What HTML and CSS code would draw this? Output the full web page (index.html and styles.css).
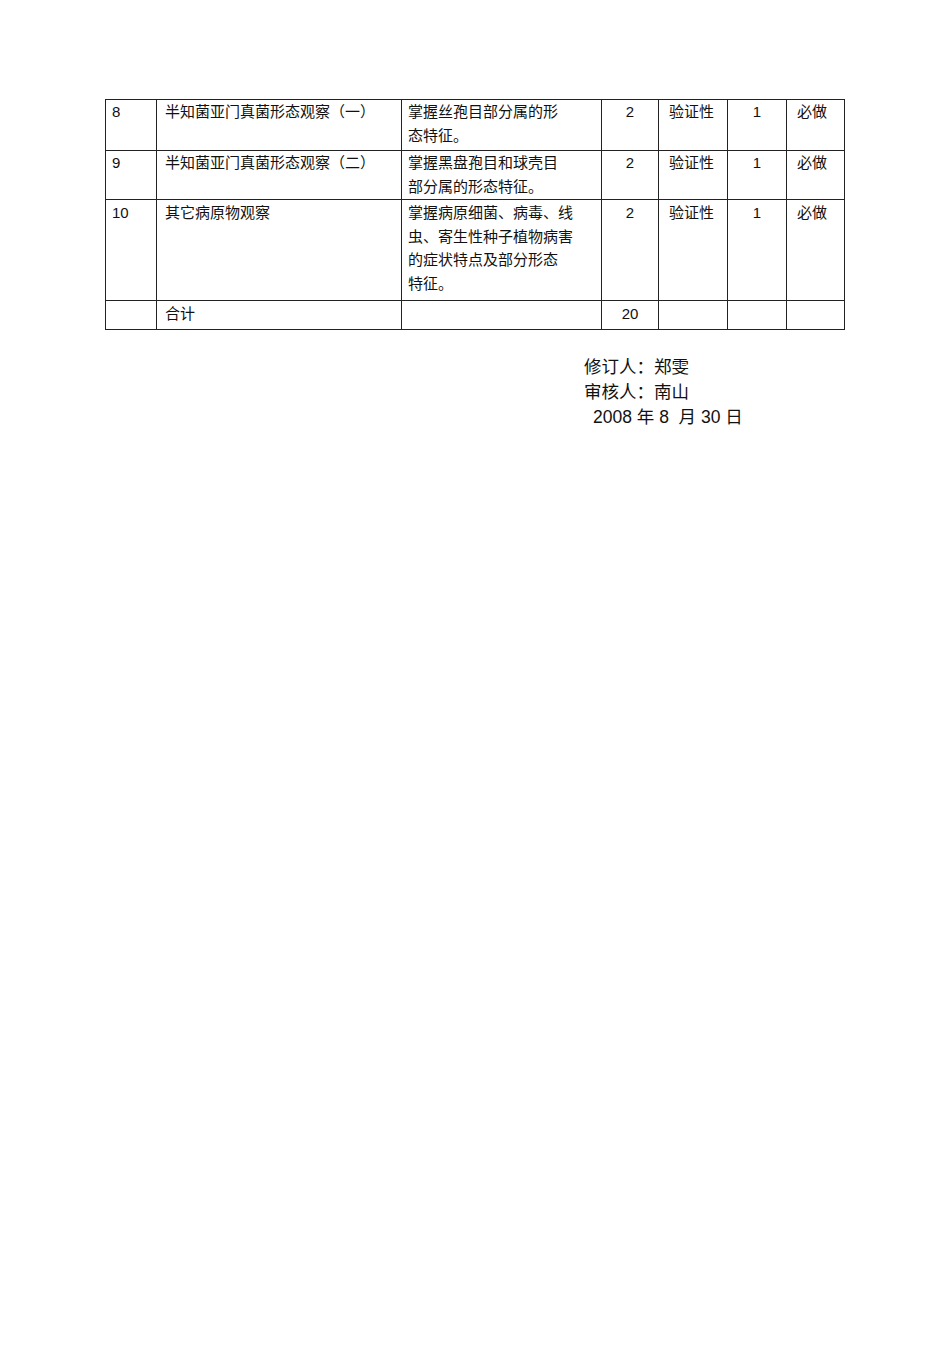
FILE: index.html
```html
<!DOCTYPE html>
<html lang="zh-CN">
<head>
<meta charset="utf-8">
<title>实验课程表</title>
<link rel="stylesheet" href="styles.css">
</head>
<body>
<div class="page">
  <table class="course">
    <colgroup>
      <col class="c1"><col class="c2"><col class="c3"><col class="c4"><col class="c5"><col class="c6"><col class="c7">
    </colgroup>
    <tbody>
      <tr class="r2">
        <td class="no">8</td>
        <td class="name">半知菌亚门真菌形态观察（一）</td>
        <td class="goal">掌握丝孢目部分属的形<br>态特征。</td>
        <td class="num">2</td>
        <td class="type">验证性</td>
        <td class="num">1</td>
        <td class="req">必做</td>
      </tr>
      <tr class="r2b">
        <td class="no">9</td>
        <td class="name">半知菌亚门真菌形态观察（二）</td>
        <td class="goal">掌握黑盘孢目和球壳目<br>部分属的形态特征。</td>
        <td class="num">2</td>
        <td class="type">验证性</td>
        <td class="num">1</td>
        <td class="req">必做</td>
      </tr>
      <tr class="r4">
        <td class="no">10</td>
        <td class="name">其它病原物观察</td>
        <td class="goal">掌握病原细菌、病毒、线<br>虫、寄生性种子植物病害<br>的症状特点及部分形态<br>特征。</td>
        <td class="num">2</td>
        <td class="type">验证性</td>
        <td class="num">1</td>
        <td class="req">必做</td>
      </tr>
      <tr class="r1">
        <td class="no"></td>
        <td class="name">合计</td>
        <td class="goal"></td>
        <td class="num">20</td>
        <td class="type"></td>
        <td class="num"></td>
        <td class="req"></td>
      </tr>
    </tbody>
  </table>

  <div class="sign">
    <div class="line">修订人：郑雯</div>
    <div class="line">审核人：南山</div>
    <div class="line date">2008 年 8&nbsp; 月 30 日</div>
  </div>
</div>
</body>
</html>
```

FILE: styles.css
```css
html, body {
  margin: 0;
  padding: 0;
  background: #ffffff;
}

body {
  font-family: "Liberation Sans", "Noto Sans CJK SC", sans-serif;
  color: #111111;
}

.page {
  padding: 99px 0 0 105px;
}

.course {
  border-collapse: collapse;
  table-layout: fixed;
  width: 739px;
  font-size: 15px;
  line-height: 24px;
}

.c1 { width: 51px; }
.c2 { width: 245px; }
.c3 { width: 200px; }
.c4 { width: 57px; }
.c5 { width: 69px; }
.c6 { width: 59px; }
.c7 { width: 58px; }

.course td {
  border: 1px solid #222222;
  vertical-align: top;
  padding: 0 4px 0 6px;
  white-space: nowrap;
}

.r2 td { height: 50px; }
.r2b td { height: 48px; }
.r4 td { height: 99px; line-height: 23.5px; padding-top: 1px; }
.r1 td { height: 27px; padding-top: 1px; }

.course td.no { padding-left: 6px; }
.course td.name { padding-left: 8px; }
.course td.goal { padding-left: 6px; }
.course td.num { text-align: center; padding-left: 2px; padding-right: 2px; }
.course td.type { padding-left: 10px; }
.course td.req { padding-left: 10px; }

.sign {
  margin: 25px 0 0 479px;
  font-size: 17.5px;
  line-height: 25px;
}

.sign .date {
  padding-left: 9px;
}
```
